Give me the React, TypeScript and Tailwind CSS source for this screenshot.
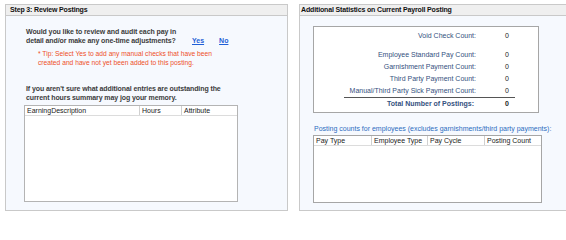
import React from "react";

// Stats shown in the right-hand summary box
const STATS = [
  { label: "Employee Standard Pay Count:", value: 0 },
  { label: "Garnishment Payment Count:", value: 0 },
  { label: "Third Party Payment Count:", value: 0 },
  { label: "Manual/Third Party Sick Payment Count:", value: 0 },
];

const font = { fontFamily: '"Liberation Sans", Arial, sans-serif' };

const PanelHeader = ({ title, className }: { title: string; className?: string }) => (
  <div
    className={
      "h-[12px] border border-[#c9c9c9] bg-[#efefef] text-[7px] font-bold leading-[10px] tracking-[-0.15px] text-[#111] " +
      (className ?? "")
    }
  >
    {title}
  </div>
);

const GridHeader = ({ cols }: { cols: { label: string; w: string }[] }) => (
  <div className="flex h-[10px] border-b border-[#dcdcdc] bg-white">
    {cols.map((c, i) => (
      <div
        key={c.label}
        className={
          "truncate pl-[2px] text-[7px] leading-[9px] text-[#222] " +
          c.w +
          (i < cols.length - 1 ? " border-r border-[#d0d0d0]" : "")
        }
      >
        {c.label}
      </div>
    ))}
  </div>
);

const StatRow = ({ label, value, bold }: { label: string; value: number; bold?: boolean }) => (
  <div
    className={
      "grid h-[12px] grid-cols-[132px_1fr] leading-[12px]" +
      (bold ? " border-t border-[#555] font-bold" : "")
    }
  >
    <div className={"whitespace-nowrap text-right text-[#34507e]" + (bold ? " pr-[2px]" : "")}>
      {label}
    </div>
    <div className="pl-[29px] text-[#222]">{value}</div>
  </div>
);

export default function App() {
  return (
    <div className="h-[221px] w-[566px] overflow-hidden bg-white" style={font}>
      <div className="flex gap-[11px] pl-[5px] pt-[4px]">
        {/* Step 3 panel */}
        <div className="flex w-[283px] shrink-0 flex-col">
          <PanelHeader title="Step 3: Review Postings" className="pl-[4px]" />
          <div className="h-[195px] border-x border-b border-[#c9c9c9] bg-[#f6f9fe] pt-[11px]">
            <div className="flex items-end pl-[20px]">
              <p className="w-[166px] text-[7px] font-bold leading-[9px] tracking-[-0.1px] text-[#3c3c3c]">
                Would you like to review and audit each pay in detail and/or make any one-time
                adjustments?
              </p>
              <a className="text-[7px] font-bold leading-[9px] text-[#1f5fd6] underline">Yes</a>
              <a className="ml-[15px] text-[7px] font-bold leading-[9px] text-[#1f5fd6] underline">
                No
              </a>
            </div>
            <p className="mt-[5px] box-content w-[182px] pl-[32px] text-[6.7px] leading-[8.5px] text-[#ee5029]">
              * Tip: Select Yes to add any manual checks that have been created and have not yet
              been added to this posting.
            </p>
            <p className="mt-[17px] box-content w-[218px] pl-[20px] text-[7px] font-bold leading-[9px] tracking-[-0.1px] text-[#3c3c3c]">
              If you aren't sure what additional entries are outstanding the current hours summary
              may jog your memory.
            </p>
            <div className="ml-[18px] mt-[3px] h-[97px] w-[214px] border border-[#b4b4b4] bg-white">
              <GridHeader
                cols={[
                  { label: "EarningDescription", w: "w-[115px]" },
                  { label: "Hours", w: "w-[42px]" },
                  { label: "Attribute", w: "flex-1" },
                ]}
              />
            </div>
          </div>
        </div>

        {/* Additional statistics panel */}
        <div className="flex w-[280px] shrink-0 flex-col">
          <PanelHeader title="Additional Statistics on Current Payroll Posting" className="pl-[1px]" />
          <div className="h-[195px] border-x border-b border-[#c9c9c9] bg-[#f6f9fe] pt-[10px]">
            <div className="ml-[13px] w-[226px] border border-[#a6a6a6] bg-white pb-[3px] pt-[3px] text-[7px]">
              <div className="ml-[30px] w-[171px]">
                <StatRow label="Void Check Count:" value={0} />
                <div className="h-[7px]" />
                {STATS.map((s) => (
                  <StatRow key={s.label} label={s.label} value={s.value} />
                ))}
                <StatRow label="Total Number of Postings:" value={0} bold />
              </div>
            </div>
            <p className="ml-[14px] mt-[11px] whitespace-nowrap text-[7px] leading-[9px] text-[#2c6cc0]">
              Posting counts for employees (excludes garnishments/third party payments):
            </p>
            <div className="ml-[13px] mt-[2px] h-[68px] w-[229px] border border-[#a6a6a6] bg-white">
              <GridHeader
                cols={[
                  { label: "Pay Type", w: "w-[58px]" },
                  { label: "Employee Type", w: "w-[56px]" },
                  { label: "Pay Cycle", w: "w-[57px]" },
                  { label: "Posting Count", w: "flex-1" },
                ]}
              />
            </div>
          </div>
        </div>
      </div>
    </div>
  );
}
